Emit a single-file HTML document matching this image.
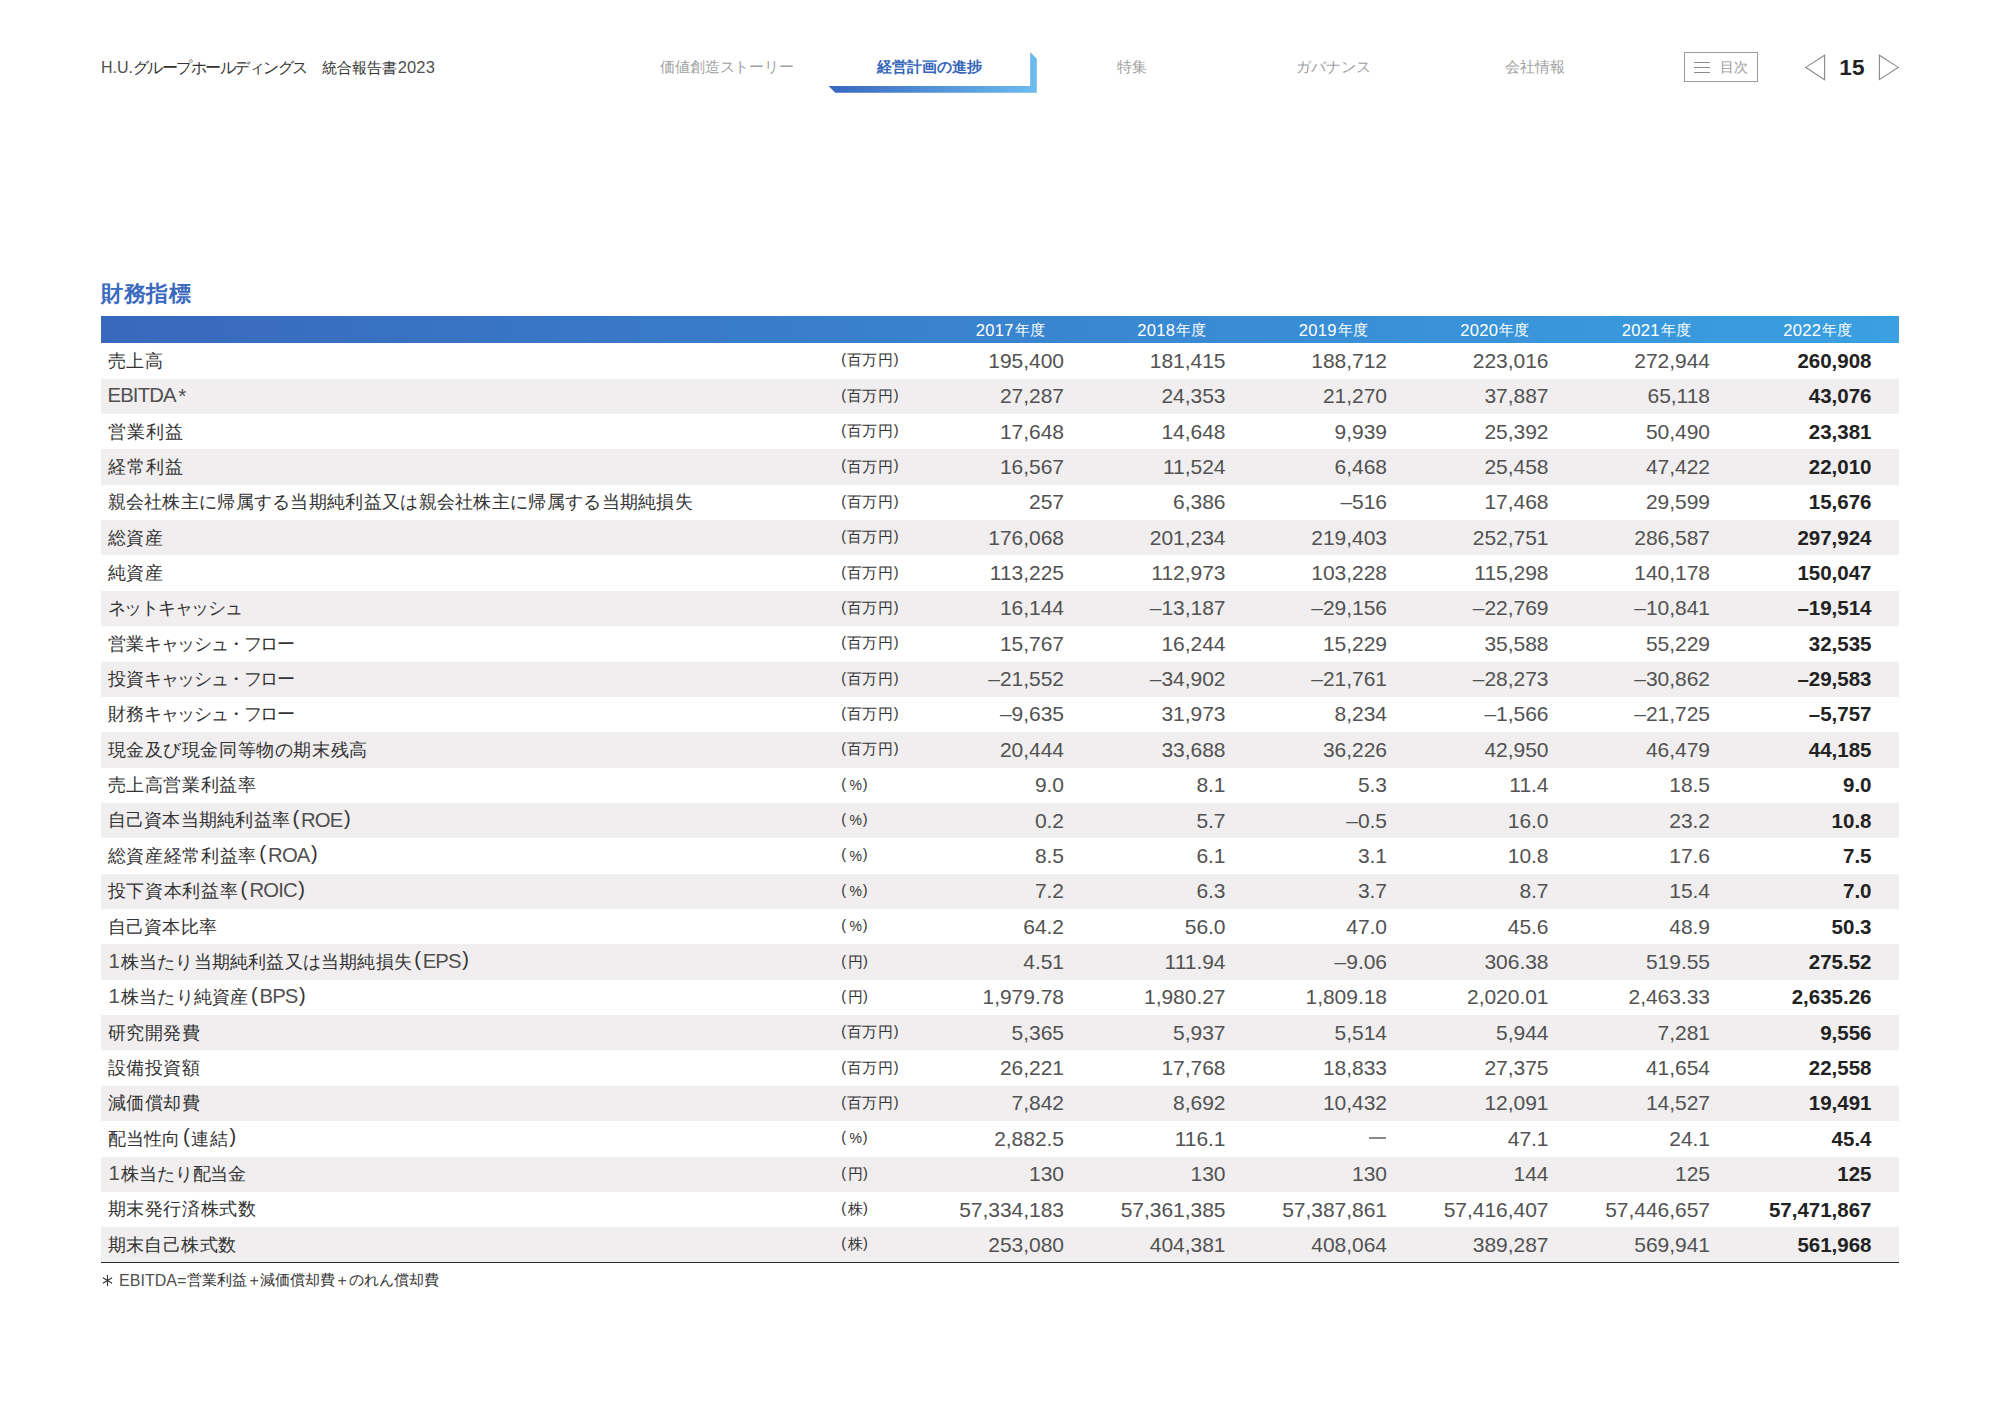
<!DOCTYPE html>
<html lang="ja"><head><meta charset="utf-8"><title>財務指標</title>
<style>
html,body{margin:0;padding:0;background:#fff;}
body{width:2000px;height:1415px;overflow:hidden;font-family:"Liberation Sans",sans-serif;color:#2b2b2b;}
#page{position:relative;width:2000px;height:1415px;overflow:hidden;background:#fff;}
i,b{font-style:normal;font-weight:normal;}
.t{position:absolute;height:36px;line-height:36px;white-space:nowrap;}
.t i,.t b{position:relative;line-height:0;}
.hl{font-size:15px;color:#333;}
.hl b{font-size:16px;color:#505050;}
.hl b.y{font-size:16.5px;letter-spacing:0.1px;margin-left:0.5px;}
.tab{width:202px;text-align:center;font-size:14.5px;color:#9f9f9f;}
.tab.on{color:#3565b8;font-weight:bold;font-size:15px;}
.bracket{position:absolute;left:828px;top:52px;}
.menu{position:absolute;left:1684px;top:52px;width:72px;height:28px;border:1px solid #9b9b9b;}
.menu i{position:absolute;left:8.5px;width:16.5px;height:1px;background:#8a8a8a;}
.mt{font-size:14px;color:#9a9a9a;}
.pg{width:40px;text-align:center;font-size:22.5px;font-weight:bold;color:#222;letter-spacing:0.3px;}
.arrows{position:absolute;left:1800px;top:50px;}
.title{position:absolute;left:101.3px;top:276px;height:36px;line-height:36px;letter-spacing:0.6px;font-size:22px;font-weight:bold;color:#3a6abf;white-space:nowrap;}
.thead{position:absolute;left:101px;top:316px;width:1798px;height:27.3px;background:linear-gradient(90deg,#3868bd 0%,#3aa0e1 100%);}
.yr{position:absolute;top:313px;width:120px;height:36px;line-height:36px;text-align:right;color:#fff;font-size:16.6px;letter-spacing:0.3px;white-space:nowrap;}
.yr i{font-size:15px;letter-spacing:0;position:relative;top:-1px;margin-left:0.8px;line-height:0;}
.bg{position:absolute;left:101px;width:1798px;background:#f0eeef;}
.lab{left:107.5px;font-size:18.4px;letter-spacing:0.28px;color:#333;}
.lab .en{font-size:20.3px;letter-spacing:-0.85px;color:#505050;}
.lab .kt{letter-spacing:-1.5px;}
.lab .as{margin-left:2.6px;font-size:21px;}
.lab .one{margin-left:1px;margin-right:1px;letter-spacing:0;}
.lab .pl{margin-left:2.3px;margin-right:1.5px;font-size:20px;}
.lab .pr{margin-left:1.5px;margin-right:3px;font-size:20px;}
.unit{left:841.2px;font-size:14.5px;color:#333;letter-spacing:0.4px;}
.unit .pl{margin-right:0.6px;}
.unit .pr{margin-left:0.6px;}
.unit .pc{margin-left:2.4px;margin-right:-0.2px;font-size:14px;}
.unit .k1{margin-left:0.7px;margin-right:-0.7px;}
.num{width:160px;text-align:right;font-size:21px;letter-spacing:-0.03px;color:#525252;}
.num.b{font-weight:bold;color:#222;font-size:20.5px;letter-spacing:0;}
.dash{position:absolute;width:16.8px;height:1.6px;background:#8a8a8a;}
.tfoot{position:absolute;left:101px;top:1262px;width:1798px;height:1.3px;background:#2a2a2a;}
.note{font-size:15px;color:#333;}
.note.e{font-size:16px;letter-spacing:-0.3px;color:#505050;}
.ast{position:absolute;left:100.6px;top:1274.1px;}

</style></head>
<body>
<div id="page">
<span class="t hl" style="left:101px;top:50px"><b>H.U.</b></span>
<span class="t hl" style="left:133px;top:50px;font-size:16px;letter-spacing:-1.55px">グループホールディングス</span>
<span class="t hl" style="left:322.3px;top:50px">統合報告書<b class="y">2023</b></span>
<span class="t tab" style="left:626px;top:49px;letter-spacing:-0.2px">価値創造ストーリー</span>
<span class="t tab on" style="left:828px;top:49px">経営計画の進捗</span>
<span class="t tab" style="left:1031px;top:49px">特集</span>
<span class="t tab" style="left:1232px;top:49px">ガバナンス</span>
<span class="t tab" style="left:1434px;top:49px">会社情報</span>
<svg class="bracket" width="212" height="42" viewBox="0 0 212 42"><defs><linearGradient id="bg" x1="0" y1="0" x2="1" y2="0"><stop offset="0" stop-color="#3866bf"/><stop offset="1" stop-color="#6cbcee"/></linearGradient></defs><path d="M0.55 33.95 L202.15 33.95 L202.15 0 L208.8 6.65 L208.8 40.65 L7.25 40.65 Z" fill="url(#bg)"/></svg>
<div class="menu"><i style="top:9.4px"></i><i style="top:14.3px"></i><i style="top:19.2px"></i></div>
<span class="t mt" style="left:1720px;top:49px">目次</span>
<svg class="arrows" width="110" height="36" viewBox="0 0 110 36"><path d="M24.6 5.2 L5.7 17.4 L24.6 29.7 Z" fill="none" stroke="#858585" stroke-width="1.05"/><path d="M79.4 5.3 L98.3 17.4 L79.4 29.6 Z" fill="none" stroke="#858585" stroke-width="1.05"/></svg>
<span class="t pg" style="left:1832px;top:50px">15</span>
<div class="title">財務指標</div>
<div class="thead"></div>
<span class="yr" style="left:924.7px">2017<i>年度</i></span><span class="yr" style="left:1086.2px">2018<i>年度</i></span><span class="yr" style="left:1247.7px">2019<i>年度</i></span><span class="yr" style="left:1409.2px">2020<i>年度</i></span><span class="yr" style="left:1570.7px">2021<i>年度</i></span><span class="yr" style="left:1732.2px">2022<i>年度</i></span>
<div class="bg" style="top:378.66px;height:35.36px"></div><div class="bg" style="top:449.38px;height:35.36px"></div><div class="bg" style="top:520.10px;height:35.36px"></div><div class="bg" style="top:590.82px;height:35.36px"></div><div class="bg" style="top:661.54px;height:35.36px"></div><div class="bg" style="top:732.26px;height:35.36px"></div><div class="bg" style="top:802.98px;height:35.36px"></div><div class="bg" style="top:873.70px;height:35.36px"></div><div class="bg" style="top:944.42px;height:35.36px"></div><div class="bg" style="top:1015.14px;height:35.36px"></div><div class="bg" style="top:1085.86px;height:35.36px"></div><div class="bg" style="top:1156.58px;height:35.36px"></div><div class="bg" style="top:1227.30px;height:35.20px"></div>
<span class="t lab" style="top:343px;letter-spacing:0.78px">売上高</span><span class="t unit" style="top:342px"><i class="pl" style="top:-1px">(</i>百万円<i class="pr" style="top:-1px">)</i></span><span class="t num" style="left:904.0px;top:343px">195,400</span><span class="t num" style="left:1065.5px;top:343px">181,415</span><span class="t num" style="left:1227.0px;top:343px">188,712</span><span class="t num" style="left:1388.5px;top:343px">223,016</span><span class="t num" style="left:1550.0px;top:343px">272,944</span><span class="t num b" style="left:1711.5px;top:343px">260,908</span>
<span class="t lab" style="top:378px;letter-spacing:0.28px"><b class="en" style="top:0px">EBITDA</b><b class="en as" style="top:1px">*</b></span><span class="t unit" style="top:378px"><i class="pl" style="top:-1px">(</i>百万円<i class="pr" style="top:-1px">)</i></span><span class="t num" style="left:904.0px;top:378px">27,287</span><span class="t num" style="left:1065.5px;top:378px">24,353</span><span class="t num" style="left:1227.0px;top:378px">21,270</span><span class="t num" style="left:1388.5px;top:378px">37,887</span><span class="t num" style="left:1550.0px;top:378px">65,118</span><span class="t num b" style="left:1711.5px;top:378px">43,076</span>
<span class="t lab" style="top:414px;letter-spacing:1.08px">営業利益</span><span class="t unit" style="top:413px"><i class="pl" style="top:-1px">(</i>百万円<i class="pr" style="top:-1px">)</i></span><span class="t num" style="left:904.0px;top:414px">17,648</span><span class="t num" style="left:1065.5px;top:414px">14,648</span><span class="t num" style="left:1227.0px;top:414px">9,939</span><span class="t num" style="left:1388.5px;top:414px">25,392</span><span class="t num" style="left:1550.0px;top:414px">50,490</span><span class="t num b" style="left:1711.5px;top:414px">23,381</span>
<span class="t lab" style="top:449px;letter-spacing:1.08px">経常利益</span><span class="t unit" style="top:449px"><i class="pl" style="top:-2px">(</i>百万円<i class="pr" style="top:-2px">)</i></span><span class="t num" style="left:904.0px;top:449px">16,567</span><span class="t num" style="left:1065.5px;top:449px">11,524</span><span class="t num" style="left:1227.0px;top:449px">6,468</span><span class="t num" style="left:1388.5px;top:449px">25,458</span><span class="t num" style="left:1550.0px;top:449px">47,422</span><span class="t num b" style="left:1711.5px;top:449px">22,010</span>
<span class="t lab" style="top:484px;letter-spacing:0.30px">親会社株主に帰属する当期純利益又は親会社株主に帰属する当期純損失</span><span class="t unit" style="top:484px"><i class="pl" style="top:-1px">(</i>百万円<i class="pr" style="top:-1px">)</i></span><span class="t num" style="left:904.0px;top:484px">257</span><span class="t num" style="left:1065.5px;top:484px">6,386</span><span class="t num" style="left:1227.0px;top:484px">–516</span><span class="t num" style="left:1388.5px;top:484px">17,468</span><span class="t num" style="left:1550.0px;top:484px">29,599</span><span class="t num b" style="left:1711.5px;top:484px">15,676</span>
<span class="t lab" style="top:520px;letter-spacing:0.78px">総資産</span><span class="t unit" style="top:519px"><i class="pl" style="top:-1px">(</i>百万円<i class="pr" style="top:-1px">)</i></span><span class="t num" style="left:904.0px;top:520px">176,068</span><span class="t num" style="left:1065.5px;top:520px">201,234</span><span class="t num" style="left:1227.0px;top:520px">219,403</span><span class="t num" style="left:1388.5px;top:520px">252,751</span><span class="t num" style="left:1550.0px;top:520px">286,587</span><span class="t num b" style="left:1711.5px;top:520px">297,924</span>
<span class="t lab" style="top:555px;letter-spacing:0.78px">純資産</span><span class="t unit" style="top:555px"><i class="pl" style="top:-1px">(</i>百万円<i class="pr" style="top:-1px">)</i></span><span class="t num" style="left:904.0px;top:555px">113,225</span><span class="t num" style="left:1065.5px;top:555px">112,973</span><span class="t num" style="left:1227.0px;top:555px">103,228</span><span class="t num" style="left:1388.5px;top:555px">115,298</span><span class="t num" style="left:1550.0px;top:555px">140,178</span><span class="t num b" style="left:1711.5px;top:555px">150,047</span>
<span class="t lab" style="top:590px;letter-spacing:0.53px"><b class="kt" style="letter-spacing:-1.25px">ネットキャッシュ</b></span><span class="t unit" style="top:590px"><i class="pl" style="top:-1px">(</i>百万円<i class="pr" style="top:-1px">)</i></span><span class="t num" style="left:904.0px;top:590px">16,144</span><span class="t num" style="left:1065.5px;top:590px">–13,187</span><span class="t num" style="left:1227.0px;top:590px">–29,156</span><span class="t num" style="left:1388.5px;top:590px">–22,769</span><span class="t num" style="left:1550.0px;top:590px">–10,841</span><span class="t num b" style="left:1711.5px;top:590px">–19,514</span>
<span class="t lab" style="top:626px;letter-spacing:0.38px">営業<b class="kt" style="letter-spacing:-1.40px">キャッシュ・フロー</b></span><span class="t unit" style="top:625px"><i class="pl" style="top:-1px">(</i>百万円<i class="pr" style="top:-1px">)</i></span><span class="t num" style="left:904.0px;top:626px">15,767</span><span class="t num" style="left:1065.5px;top:626px">16,244</span><span class="t num" style="left:1227.0px;top:626px">15,229</span><span class="t num" style="left:1388.5px;top:626px">35,588</span><span class="t num" style="left:1550.0px;top:626px">55,229</span><span class="t num b" style="left:1711.5px;top:626px">32,535</span>
<span class="t lab" style="top:661px;letter-spacing:0.38px">投資<b class="kt" style="letter-spacing:-1.40px">キャッシュ・フロー</b></span><span class="t unit" style="top:661px"><i class="pl" style="top:-1px">(</i>百万円<i class="pr" style="top:-1px">)</i></span><span class="t num" style="left:904.0px;top:661px">–21,552</span><span class="t num" style="left:1065.5px;top:661px">–34,902</span><span class="t num" style="left:1227.0px;top:661px">–21,761</span><span class="t num" style="left:1388.5px;top:661px">–28,273</span><span class="t num" style="left:1550.0px;top:661px">–30,862</span><span class="t num b" style="left:1711.5px;top:661px">–29,583</span>
<span class="t lab" style="top:696px;letter-spacing:0.38px">財務<b class="kt" style="letter-spacing:-1.40px">キャッシュ・フロー</b></span><span class="t unit" style="top:696px"><i class="pl" style="top:-1px">(</i>百万円<i class="pr" style="top:-1px">)</i></span><span class="t num" style="left:904.0px;top:696px">–9,635</span><span class="t num" style="left:1065.5px;top:696px">31,973</span><span class="t num" style="left:1227.0px;top:696px">8,234</span><span class="t num" style="left:1388.5px;top:696px">–1,566</span><span class="t num" style="left:1550.0px;top:696px">–21,725</span><span class="t num b" style="left:1711.5px;top:696px">–5,757</span>
<span class="t lab" style="top:732px;letter-spacing:0.60px">現金及び現金同等物の期末残高</span><span class="t unit" style="top:731px"><i class="pl" style="top:-1px">(</i>百万円<i class="pr" style="top:-1px">)</i></span><span class="t num" style="left:904.0px;top:732px">20,444</span><span class="t num" style="left:1065.5px;top:732px">33,688</span><span class="t num" style="left:1227.0px;top:732px">36,226</span><span class="t num" style="left:1388.5px;top:732px">42,950</span><span class="t num" style="left:1550.0px;top:732px">46,479</span><span class="t num b" style="left:1711.5px;top:732px">44,185</span>
<span class="t lab" style="top:767px;letter-spacing:0.63px">売上高営業利益率</span><span class="t unit" style="top:767px"><i class="pl" style="top:-1px">(</i><b class="pc">%</b><i class="pr" style="top:-1px">)</i></span><span class="t num" style="left:904.0px;top:767px">9.0</span><span class="t num" style="left:1065.5px;top:767px">8.1</span><span class="t num" style="left:1227.0px;top:767px">5.3</span><span class="t num" style="left:1388.5px;top:767px">11.4</span><span class="t num" style="left:1550.0px;top:767px">18.5</span><span class="t num b" style="left:1711.5px;top:767px">9.0</span>
<span class="t lab" style="top:802px;letter-spacing:0.28px">自己資本当期純利益率<i class="pl" style="top:-1px">(</i><b class="en" style="top:1px">ROE</b><i class="pr" style="top:-1px">)</i></span><span class="t unit" style="top:802px"><i class="pl" style="top:-1px">(</i><b class="pc">%</b><i class="pr" style="top:-1px">)</i></span><span class="t num" style="left:904.0px;top:803px">0.2</span><span class="t num" style="left:1065.5px;top:803px">5.7</span><span class="t num" style="left:1227.0px;top:803px">–0.5</span><span class="t num" style="left:1388.5px;top:803px">16.0</span><span class="t num" style="left:1550.0px;top:803px">23.2</span><span class="t num b" style="left:1711.5px;top:803px">10.8</span>
<span class="t lab" style="top:838px;letter-spacing:0.68px">総資産経常利益率<i class="pl" style="top:-2px">(</i><b class="en" style="top:0px">ROA</b><i class="pr" style="top:-2px">)</i></span><span class="t unit" style="top:838px"><i class="pl" style="top:-2px">(</i><b class="pc">%</b><i class="pr" style="top:-2px">)</i></span><span class="t num" style="left:904.0px;top:838px">8.5</span><span class="t num" style="left:1065.5px;top:838px">6.1</span><span class="t num" style="left:1227.0px;top:838px">3.1</span><span class="t num" style="left:1388.5px;top:838px">10.8</span><span class="t num" style="left:1550.0px;top:838px">17.6</span><span class="t num b" style="left:1711.5px;top:838px">7.5</span>
<span class="t lab" style="top:873px;letter-spacing:0.68px">投下資本利益率<i class="pl" style="top:-1px">(</i><b class="en" style="top:0px">ROIC</b><i class="pr" style="top:-1px">)</i></span><span class="t unit" style="top:873px"><i class="pl" style="top:-1px">(</i><b class="pc">%</b><i class="pr" style="top:-1px">)</i></span><span class="t num" style="left:904.0px;top:873px">7.2</span><span class="t num" style="left:1065.5px;top:873px">6.3</span><span class="t num" style="left:1227.0px;top:873px">3.7</span><span class="t num" style="left:1388.5px;top:873px">8.7</span><span class="t num" style="left:1550.0px;top:873px">15.4</span><span class="t num b" style="left:1711.5px;top:873px">7.0</span>
<span class="t lab" style="top:909px;letter-spacing:0.28px">自己資本比率</span><span class="t unit" style="top:908px"><i class="pl" style="top:-1px">(</i><b class="pc">%</b><i class="pr" style="top:-1px">)</i></span><span class="t num" style="left:904.0px;top:909px">64.2</span><span class="t num" style="left:1065.5px;top:909px">56.0</span><span class="t num" style="left:1227.0px;top:909px">47.0</span><span class="t num" style="left:1388.5px;top:909px">45.6</span><span class="t num" style="left:1550.0px;top:909px">48.9</span><span class="t num b" style="left:1711.5px;top:909px">50.3</span>
<span class="t lab" style="top:944px;letter-spacing:0.20px"><b class="en one" style="top:0px">1</b>株当たり当期純利益又は当期純損失<i class="pl" style="top:-2px">(</i><b class="en" style="top:0px">EPS</b><i class="pr" style="top:-2px">)</i></span><span class="t unit" style="top:944px"><i class="pl" style="top:-1px">(</i><b class="k1">円</b><i class="pr" style="top:-1px">)</i></span><span class="t num" style="left:904.0px;top:944px">4.51</span><span class="t num" style="left:1065.5px;top:944px">111.94</span><span class="t num" style="left:1227.0px;top:944px">–9.06</span><span class="t num" style="left:1388.5px;top:944px">306.38</span><span class="t num" style="left:1550.0px;top:944px">519.55</span><span class="t num b" style="left:1711.5px;top:944px">275.52</span>
<span class="t lab" style="top:979px;letter-spacing:0.28px"><b class="en one" style="top:0px">1</b>株当たり純資産<i class="pl" style="top:-1px">(</i><b class="en" style="top:0px">BPS</b><i class="pr" style="top:-1px">)</i></span><span class="t unit" style="top:979px"><i class="pl" style="top:-1px">(</i><b class="k1">円</b><i class="pr" style="top:-1px">)</i></span><span class="t num" style="left:904.0px;top:979px">1,979.78</span><span class="t num" style="left:1065.5px;top:979px">1,980.27</span><span class="t num" style="left:1227.0px;top:979px">1,809.18</span><span class="t num" style="left:1388.5px;top:979px">2,020.01</span><span class="t num" style="left:1550.0px;top:979px">2,463.33</span><span class="t num b" style="left:1711.5px;top:979px">2,635.26</span>
<span class="t lab" style="top:1015px;letter-spacing:0.53px">研究開発費</span><span class="t unit" style="top:1014px"><i class="pl" style="top:-1px">(</i>百万円<i class="pr" style="top:-1px">)</i></span><span class="t num" style="left:904.0px;top:1015px">5,365</span><span class="t num" style="left:1065.5px;top:1015px">5,937</span><span class="t num" style="left:1227.0px;top:1015px">5,514</span><span class="t num" style="left:1388.5px;top:1015px">5,944</span><span class="t num" style="left:1550.0px;top:1015px">7,281</span><span class="t num b" style="left:1711.5px;top:1015px">9,556</span>
<span class="t lab" style="top:1050px;letter-spacing:0.53px">設備投資額</span><span class="t unit" style="top:1050px"><i class="pl" style="top:-1px">(</i>百万円<i class="pr" style="top:-1px">)</i></span><span class="t num" style="left:904.0px;top:1050px">26,221</span><span class="t num" style="left:1065.5px;top:1050px">17,768</span><span class="t num" style="left:1227.0px;top:1050px">18,833</span><span class="t num" style="left:1388.5px;top:1050px">27,375</span><span class="t num" style="left:1550.0px;top:1050px">41,654</span><span class="t num b" style="left:1711.5px;top:1050px">22,558</span>
<span class="t lab" style="top:1085px;letter-spacing:0.53px">減価償却費</span><span class="t unit" style="top:1085px"><i class="pl" style="top:-1px">(</i>百万円<i class="pr" style="top:-1px">)</i></span><span class="t num" style="left:904.0px;top:1085px">7,842</span><span class="t num" style="left:1065.5px;top:1085px">8,692</span><span class="t num" style="left:1227.0px;top:1085px">10,432</span><span class="t num" style="left:1388.5px;top:1085px">12,091</span><span class="t num" style="left:1550.0px;top:1085px">14,527</span><span class="t num b" style="left:1711.5px;top:1085px">19,491</span>
<span class="t lab" style="top:1121px;letter-spacing:0.28px">配当性向<i class="pl" style="top:-2px">(</i>連結<i class="pr" style="top:-2px">)</i></span><span class="t unit" style="top:1120px"><i class="pl" style="top:-1px">(</i><b class="pc">%</b><i class="pr" style="top:-1px">)</i></span><span class="t num" style="left:904.0px;top:1121px">2,882.5</span><span class="t num" style="left:1065.5px;top:1121px">116.1</span><span class="dash" style="left:1369.2px;top:1137.1px"></span><span class="t num" style="left:1388.5px;top:1121px">47.1</span><span class="t num" style="left:1550.0px;top:1121px">24.1</span><span class="t num b" style="left:1711.5px;top:1121px">45.4</span>
<span class="t lab" style="top:1156px;letter-spacing:-0.07px"><b class="en one" style="top:0px">1</b>株当たり配当金</span><span class="t unit" style="top:1156px"><i class="pl" style="top:-1px">(</i><b class="k1">円</b><i class="pr" style="top:-1px">)</i></span><span class="t num" style="left:904.0px;top:1156px">130</span><span class="t num" style="left:1065.5px;top:1156px">130</span><span class="t num" style="left:1227.0px;top:1156px">130</span><span class="t num" style="left:1388.5px;top:1156px">144</span><span class="t num" style="left:1550.0px;top:1156px">125</span><span class="t num b" style="left:1711.5px;top:1156px">125</span>
<span class="t lab" style="top:1191px;letter-spacing:0.63px">期末発行済株式数</span><span class="t unit" style="top:1191px"><i class="pl" style="top:-1px">(</i><b class="k1">株</b><i class="pr" style="top:-1px">)</i></span><span class="t num" style="left:904.0px;top:1192px">57,334,183</span><span class="t num" style="left:1065.5px;top:1192px">57,361,385</span><span class="t num" style="left:1227.0px;top:1192px">57,387,861</span><span class="t num" style="left:1388.5px;top:1192px">57,416,407</span><span class="t num" style="left:1550.0px;top:1192px">57,446,657</span><span class="t num b" style="left:1711.5px;top:1192px">57,471,867</span>
<span class="t lab" style="top:1227px;letter-spacing:0.45px">期末自己株式数</span><span class="t unit" style="top:1226px"><i class="pl" style="top:-1px">(</i><b class="k1">株</b><i class="pr" style="top:-1px">)</i></span><span class="t num" style="left:904.0px;top:1227px">253,080</span><span class="t num" style="left:1065.5px;top:1227px">404,381</span><span class="t num" style="left:1227.0px;top:1227px">408,064</span><span class="t num" style="left:1388.5px;top:1227px">389,287</span><span class="t num" style="left:1550.0px;top:1227px">569,941</span><span class="t num b" style="left:1711.5px;top:1227px">561,968</span>
<div class="tfoot"></div>
<svg class="ast" width="13" height="13" viewBox="0 0 13 13"><g stroke="#333" stroke-width="1.1" fill="none"><path d="M6.5 1 V12"/><path d="M1.9 3.8 L11.1 9.2"/><path d="M11.1 3.8 L1.9 9.2"/></g></svg>
<span class="t note e" style="left:119.1px;top:1263px;letter-spacing:0">EBITDA=</span>
<span class="t note" style="left:187.2px;top:1262px">営業利益</span>
<span class="t note e" style="left:249.5px;top:1263px">+</span>
<span class="t note" style="left:260px;top:1262px">減価償却費</span>
<span class="t note e" style="left:337.5px;top:1263px">+</span>
<span class="t note" style="left:349.2px;top:1262px">のれん償却費</span>
</div>
</body></html>
